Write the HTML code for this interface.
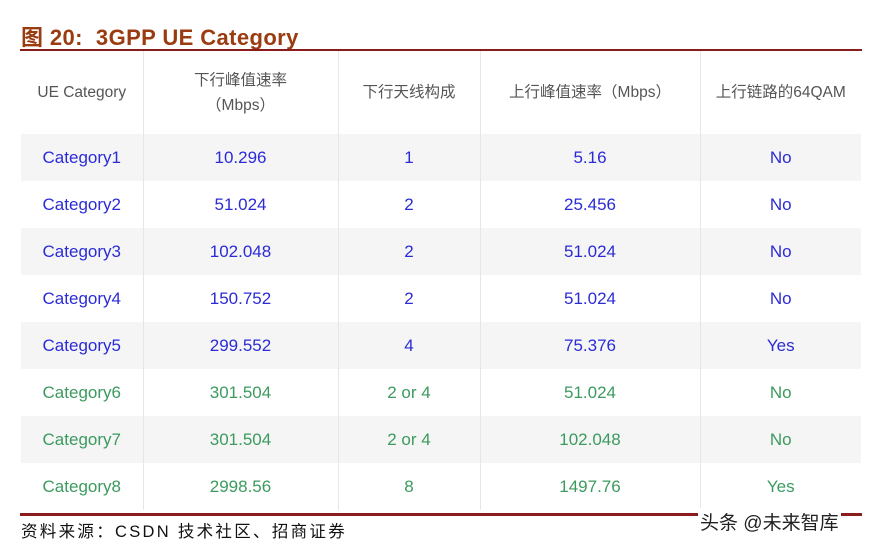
<!DOCTYPE html>
<html><head><meta charset="utf-8"><style>
body{margin:0;width:871px;height:548px;background:#fff;position:relative;overflow:hidden;font-family:"Liberation Sans","Noto Sans CJK SC",sans-serif}
.title{position:absolute;left:21px;top:20px;font-size:22px;font-weight:bold;color:#9a3b10;white-space:nowrap;letter-spacing:0.4px}
.hl{position:absolute;left:20px;width:842px;top:49px;height:2px;background:#8a1c1c}
table{position:absolute;left:21px;top:51px;border-collapse:collapse;width:840px;table-layout:fixed}
td{text-align:center;border-right:1px solid #e6e6e6;font-size:17px;padding:0}
td:last-child{border-right:none}
tr.h td{height:83px;color:#555;font-size:15.5px;line-height:25px}
tr.r td{height:47px}
tr.g td{background:#f5f5f5}
.b td{color:#2b2bd6}.gr td{color:#3c9a5f}
.bl{position:absolute;left:20px;width:842px;top:513px;height:3px;background:#8a1c1c}
.foot{position:absolute;left:21px;top:518px;font-size:16.5px;color:#111;white-space:nowrap;letter-spacing:2.3px}
.wm{position:absolute;left:698px;top:508px;font-size:19px;color:#222;background:#fff;padding:0 2px;white-space:nowrap}
</style></head><body>
<div class="title">图 20:&nbsp; 3GPP UE Category</div>
<div class="hl"></div>
<table>
<colgroup><col style="width:122px"><col style="width:195px"><col style="width:142px"><col style="width:220px"><col style="width:161px"></colgroup>
<tr class="h"><td>UE Category</td><td>下行峰值速率<br>（Mbps）</td><td>下行天线构成</td><td>上行峰值速率（Mbps）</td><td>上行链路的64QAM</td></tr>
<tr class="r g b"><td>Category1</td><td>10.296</td><td>1</td><td>5.16</td><td>No</td></tr>
<tr class="r b"><td>Category2</td><td>51.024</td><td>2</td><td>25.456</td><td>No</td></tr>
<tr class="r g b"><td>Category3</td><td>102.048</td><td>2</td><td>51.024</td><td>No</td></tr>
<tr class="r b"><td>Category4</td><td>150.752</td><td>2</td><td>51.024</td><td>No</td></tr>
<tr class="r g b"><td>Category5</td><td>299.552</td><td>4</td><td>75.376</td><td>Yes</td></tr>
<tr class="r gr"><td>Category6</td><td>301.504</td><td>2 or 4</td><td>51.024</td><td>No</td></tr>
<tr class="r g gr"><td>Category7</td><td>301.504</td><td>2 or 4</td><td>102.048</td><td>No</td></tr>
<tr class="r gr"><td>Category8</td><td>2998.56</td><td>8</td><td>1497.76</td><td>Yes</td></tr>
</table>
<div class="bl"></div>
<div class="foot">资料来源：CSDN 技术社区、招商证券</div>
<div class="wm">头条 @未来智库</div>
</body></html>
